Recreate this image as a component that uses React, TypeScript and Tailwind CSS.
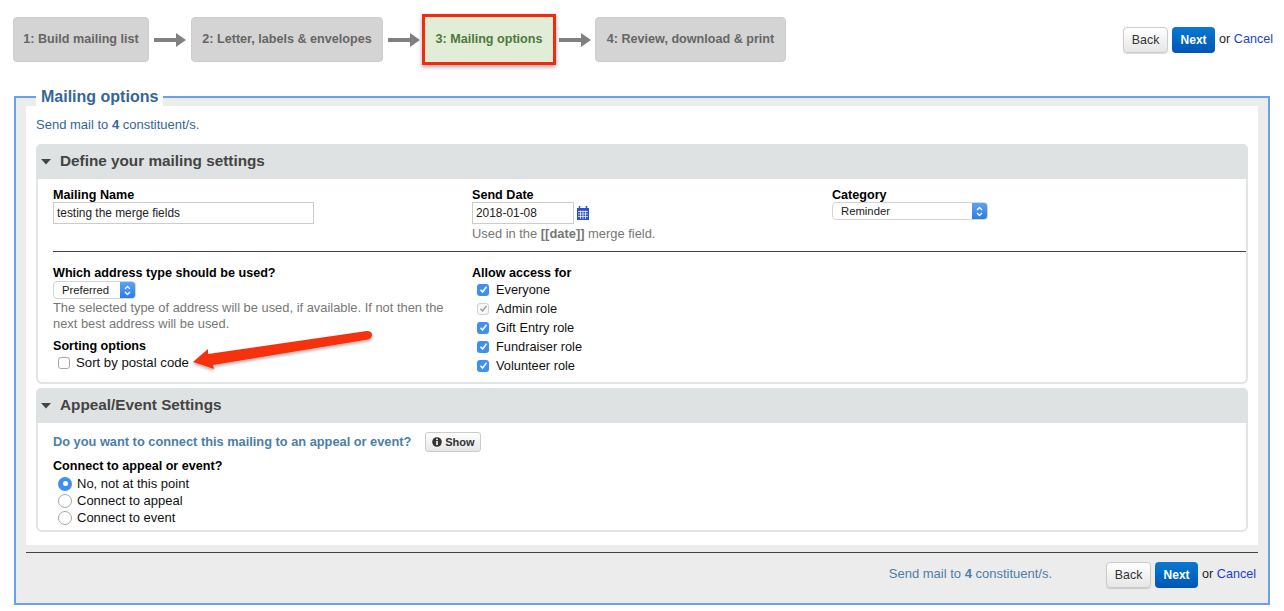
import { ReactNode } from "react";

const font = "font-['Liberation_Sans',Arial,sans-serif]";

function StepArrow({ className }: { className: string }) {
    return (
        <svg width="34" height="16" viewBox="0 0 34 16" className={`${className} shrink-0`}>
            <path d="M1 6 H23 V1 L33 8 L23 15 V10 H1 Z" fill="#808080" />
        </svg>
    );
}

function Step({ children, w }: { children: ReactNode; w: string }) {
    return (
        <div className={`${w} h-[45px] shrink-0 flex items-center justify-center rounded-[4px] bg-[#d4d4d4] border border-[#cdcdcd] text-[12.6px] font-bold text-[#666666]`}>
            {children}
        </div>
    );
}

function ActionButtons() {
    return (
        <div className="flex items-start">
            <button className="w-[45px] h-[26px] rounded-[4px] border border-[#cccccc] bg-gradient-to-b from-white to-[#e6e6e6] text-[12.4px] text-[#333333] shadow-[0_1px_1px_rgba(0,0,0,0.15)]">
                Back
            </button>
            <button className="ml-1 w-[43px] h-[26px] rounded-[4px] bg-gradient-to-b from-[#0a79cf] to-[#0056b8] text-[12px] font-bold text-white">
                Next
            </button>
            <span className="ml-1 text-[12.6px] leading-[24px] text-[#222222]">
                or <span className="text-[#1c3fd0]">Cancel</span>
            </span>
        </div>
    );
}

function PanelHeader({ title }: { title: string }) {
    return (
        <div className="h-[35px] flex items-center bg-[#dfe2e2] rounded-t-[5px] pl-[5px]">
            <svg width="10" height="6" viewBox="0 0 10 6" className="mr-2">
                <path d="M0 0 H10 L5 5.5 Z" fill="#444444" />
            </svg>
            <h2 className="ml-[1px] text-[15.3px] font-bold text-[#444444]">{title}</h2>
        </div>
    );
}

function Label({ children }: { children: ReactNode }) {
    return <div className="text-[12.6px] leading-[17px] -mb-[2px] font-bold text-black">{children}</div>;
}

function NativeSelect({ value, w }: { value: string; w: string }) {
    return (
        <div className={`${w} h-[18px] flex items-center justify-between rounded-[4px] border border-[#d4d4d4] bg-white text-[11.3px] text-[#222222] overflow-hidden`}>
            <span className="pl-2">{value}</span>
            <span className="w-[15px] h-[18px] flex items-center justify-center bg-gradient-to-b from-[#5da5f8] to-[#2a78e6]">
                <svg width="7" height="11" viewBox="0 0 7 11" fill="none" stroke="white" strokeWidth="1.3">
                    <path d="M1 4 L3.5 1.5 L6 4 M1 7 L3.5 9.5 L6 7" />
                </svg>
            </span>
        </div>
    );
}

function Check({ label, state = "on" }: { label: string; state?: "on" | "off" | "disabled" }) {
    return (
        <div className="flex items-center h-[19px] pl-[5px] text-[12.8px] text-[#111111]">
            {state === "on" && (
                <span className="w-3 h-3 rounded-[3px] bg-[#3d90f0] flex items-center justify-center">
                    <svg width="9" height="9" viewBox="0 0 9 9" fill="none" stroke="white" strokeWidth="1.6">
                        <path d="M1.5 4.7 L3.6 7 L7.5 1.8" />
                    </svg>
                </span>
            )}
            {state === "disabled" && (
                <span className="w-3 h-3 rounded-[3px] border border-[#d0d0d0] bg-[#f8f8f8] flex items-center justify-center">
                    <svg width="9" height="9" viewBox="0 0 9 9" fill="none" stroke="#9a9a9a" strokeWidth="1.4">
                        <path d="M1.5 4.7 L3.6 7 L7.5 1.8" />
                    </svg>
                </span>
            )}
            {state === "off" && <span className="w-3 h-3 rounded-[3px] border border-[#a8a8a8] bg-white" />}
            <span className={state === "off" ? "ml-[6px] text-[13.2px]" : "ml-[7px]"}>{label}</span>
        </div>
    );
}

function Radio({ label, on = false }: { label: string; on?: boolean }) {
    return (
        <div className="flex items-center h-[17px] pl-[5px] text-[13px] text-[#111111]">
            {on ? (
                <span className="w-[14px] h-[14px] rounded-full bg-[#3d90f0] flex items-center justify-center">
                    <span className="w-[5px] h-[5px] rounded-full bg-white" />
                </span>
            ) : (
                <span className="w-[14px] h-[14px] rounded-full border border-[#a8a8a8] bg-white" />
            )}
            <span className="ml-[5px]">{label}</span>
        </div>
    );
}

export default function App() {
    return (
        <div className={`${font} relative w-[1284px] h-[611px] bg-white overflow-hidden`}>
            {/* wizard steps */}
            <div className="flex items-start justify-between pt-[14px] pl-[13px] pr-[11px] h-[96px]">
                <div className="flex items-center h-[51px]">
                    <Step w="w-[136px]">1: Build mailing list</Step>
                    <StepArrow className="mx-1" />
                    <Step w="w-[192px]">2: Letter, labels &amp; envelopes</Step>
                    <StepArrow className="ml-1 mr-[1px]" />
                    <div className="w-[134px] h-[51px] shrink-0 flex items-center justify-center bg-[#e1edd6] border-[3px] border-[#f5290e] text-[12.6px] font-bold text-[#4d7a3c] shadow-[0_2px_4px_rgba(0,0,0,0.35)]">
                        3: Mailing options
                    </div>
                    <StepArrow className="ml-[2px] mr-[3px]" />
                    <Step w="w-[191px]">4: Review, download &amp; print</Step>
                </div>
                <div className="mt-[13px]">
                    <ActionButtons />
                </div>
            </div>

            {/* main fieldset */}
            <div className="relative ml-[14px] w-[1256px] h-[509px] border-2 border-[#6b9ef5] bg-[#ececec] px-[10px] pt-2">
                <div className="absolute left-[20px] top-[-11px] px-[5px] h-5 bg-white text-[16px] leading-5 font-bold text-[#336699]">
                    Mailing options
                </div>
                <div className="h-[439px] bg-white px-[10px] pt-[10px]">
                    <p className="h-[28px] text-[13px] leading-[17px] text-[#336699]">
                        Send mail to <b>4</b> constituent/s.
                    </p>

                    {/* mailing settings */}
                    <section className="h-[240px] rounded-[6px] border-2 border-t-0 border-[#e2e5e5]">
                        <div className="-mx-[2px]">
                            <PanelHeader title="Define your mailing settings" />
                        </div>
                        <div className="pl-[15px] pt-2">
                            <div className="grid grid-cols-[419px_360px_1fr] h-[64px]">
                                <div>
                                    <Label>Mailing Name</Label>
                                    <div className="w-[261px] h-[22px] border border-[#cccccc] pl-[3px] text-[11.9px] leading-[20px] text-[#222222]">
                                        testing the merge fields
                                    </div>
                                </div>
                                <div>
                                    <Label>Send Date</Label>
                                    <div className="flex items-center">
                                        <div className="w-[102px] h-[22px] border border-[#cccccc] pl-[3px] text-[11.9px] leading-[20px] text-[#222222]">
                                            2018-01-08
                                        </div>
                                        <svg width="12" height="14" viewBox="0 0 12 14" className="ml-[3px]">
                                            <path d="M0 2 H12 V14 H0 Z" fill="#2b50c8" />
                                            <path d="M2.5 0 V3 M9.5 0 V3" stroke="#2b50c8" strokeWidth="1.5" />
                                            <path d="M1 5.5 H11 M1 8 H11 M1 10.5 H11 M3.5 4.5 V13 M6 4.5 V13 M8.5 4.5 V13" stroke="white" strokeWidth="0.7" />
                                        </svg>
                                    </div>
                                    <div className="mt-[3px] text-[12.9px] leading-[14px] text-[#777777]">
                                        Used in the <b>[[date]]</b> merge field.
                                    </div>
                                </div>
                                <div>
                                    <Label>Category</Label>
                                    <NativeSelect value="Reminder" w="w-[156px]" />
                                </div>
                            </div>
                            <hr className="border-0 h-px bg-[#444444]" />
                            <div className="grid grid-cols-[419px_1fr] pt-[13px]">
                                <div>
                                    <Label>Which address type should be used?</Label>
                                    <div className="mt-px">
                                        <NativeSelect value="Preferred" w="w-[83px]" />
                                    </div>
                                    <p className="w-[396px] mt-px text-[12.9px] leading-[16px] text-[#777777]">
                                        The selected type of address will be used, if available. If not then the next best address will be used.
                                    </p>
                                    <div className="mt-[6px]">
                                        <Label>Sorting options</Label>
                                    </div>
                                    <Check label="Sort by postal code" state="off" />
                                </div>
                                <div>
                                    <Label>Allow access for</Label>
                                    <Check label="Everyone" />
                                    <Check label="Admin role" state="disabled" />
                                    <Check label="Gift Entry role" />
                                    <Check label="Fundraiser role" />
                                    <Check label="Volunteer role" />
                                </div>
                            </div>
                        </div>
                    </section>

                    {/* appeal settings */}
                    <section className="mt-1 h-[144px] rounded-[6px] border-2 border-t-0 border-[#e2e5e5]">
                        <div className="-mx-[2px]">
                            <PanelHeader title="Appeal/Event Settings" />
                        </div>
                        <div className="pl-[15px] pt-[9px]">
                            <div className="flex items-center h-[20px]">
                                <span className="text-[12.8px] font-bold text-[#4a7fa8]">
                                    Do you want to connect this mailing to an appeal or event?
                                </span>
                                <button className="ml-[14px] w-[56px] h-[20px] flex items-center justify-center rounded-[3px] border border-[#cccccc] bg-gradient-to-b from-white to-[#e6e6e6] text-[11px] font-bold text-[#333333]">
                                    <svg width="10" height="10" viewBox="0 0 10 10" className="mr-[3px]">
                                        <circle cx="5" cy="5" r="4.8" fill="#333333" />
                                        <rect x="4.2" y="1.6" width="1.6" height="1.5" fill="white" />
                                        <rect x="4.2" y="4" width="1.6" height="4" fill="white" />
                                    </svg>
                                    Show
                                </button>
                            </div>
                            <div className="mt-[6px]">
                                <Label>Connect to appeal or event?</Label>
                            </div>
                            <div className="mt-[2px]">
                                <Radio label="No, not at this point" on />
                                <Radio label="Connect to appeal" />
                                <Radio label="Connect to event" />
                            </div>
                        </div>
                    </section>
                </div>

                {/* footer actions */}
                <div className="mt-[7px] border-t border-[#444444] flex items-start justify-end pt-[9px] pr-[2px]">
                    <span className="mr-[54px] mt-[2px] text-[13px] text-[#4a7fa8]">
                        Send mail to <b>4</b> constituent/s.
                    </span>
                    <ActionButtons />
                </div>
            </div>

            {/* annotation arrow */}
            <svg width="190" height="50" viewBox="0 0 190 50" className="absolute left-[190px] top-[328px] pointer-events-none">
                <defs>
                    <filter id="arrowShadow" x="-10%" y="-30%" width="120%" height="170%">
                        <feDropShadow dx="0" dy="2" stdDeviation="1.5" floodColor="#000000" floodOpacity="0.3" />
                    </filter>
                </defs>
                <path
                    d="M177 3 Q182 3 182 7 Q182 10 178 11.5 L23 37 L24 41 L3 34 L18 21 L18 26 Z"
                    fill="#f5310f"
                    filter="url(#arrowShadow)"
                />
            </svg>
        </div>
    );
}
